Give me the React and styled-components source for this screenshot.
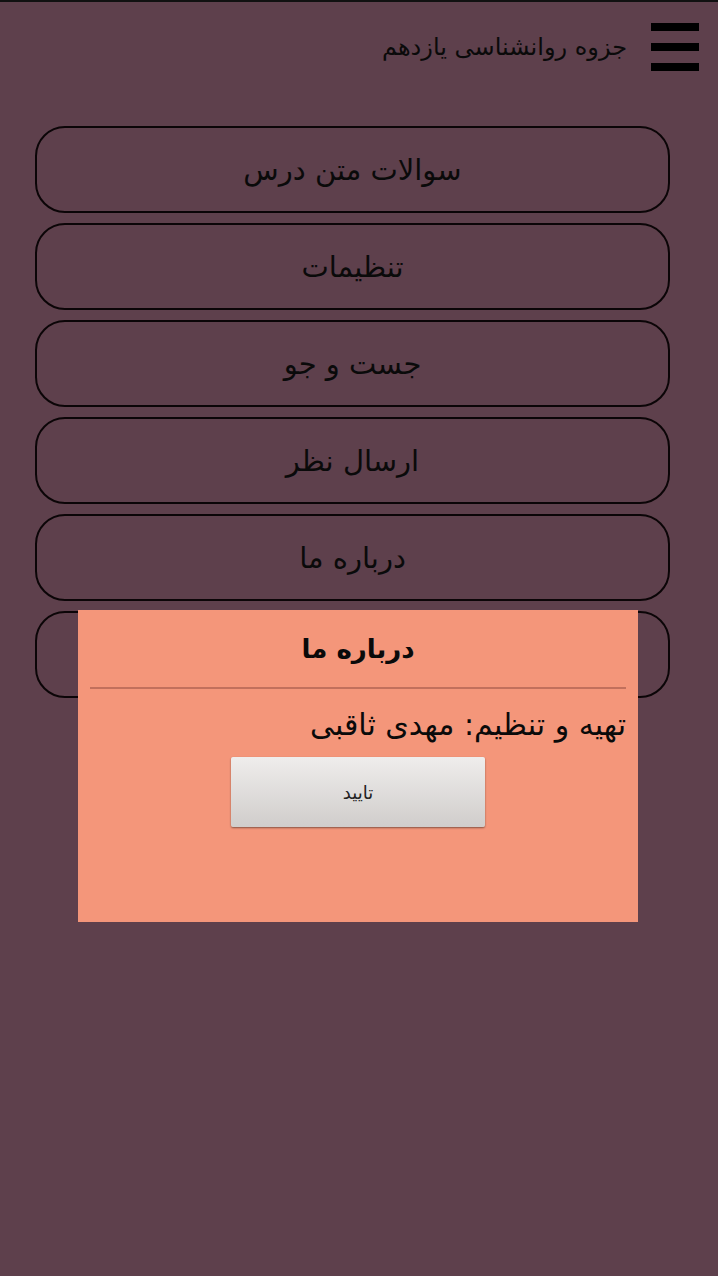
import React from "react";
import styled, { createGlobalStyle } from "styled-components";

const GlobalStyle = createGlobalStyle`
  html, body {
    margin: 0;
    padding: 0;
    background: #5e404c;
  }
  body {
    font-family: "DejaVu Sans", "Noto Sans", sans-serif;
  }
`;

// the sixth entry sits behind the dialog, its label can't be seen
const menuItems = [
  "سوالات متن درس",
  "تنظیمات",
  "جست و جو",
  "ارسال نظر",
  "درباره ما",
  "",
];

const App = () => {
  return (
    <React.Fragment>
      <GlobalStyle />
      <Screen dir="rtl">
        <TopBar>
          <MenuIcon aria-label="menu">
            <Bar />
            <Bar />
            <Bar />
          </MenuIcon>
          <Title>جزوه روانشناسی یازدهم</Title>
        </TopBar>
        <Menu>
          {menuItems.map((item, i) => (
            <MenuButton key={i}>{item}</MenuButton>
          ))}
        </Menu>
        <Dialog>
          <DialogTitle>درباره ما</DialogTitle>
          <Divider />
          <DialogText>تهیه و تنظیم: مهدی ثاقبی</DialogText>
          <OkButton>تایید</OkButton>
        </Dialog>
      </Screen>
    </React.Fragment>
  );
};

const Screen = styled.div`
  position: relative;
  width: 718px;
  height: 1276px;
  background: #5e404c;
  border-top: 2px solid #111;
  box-sizing: border-box;
  overflow: hidden;
`;

const TopBar = styled.div`
  display: flex;
  align-items: center;
  height: 90px;
  padding: 0 19px 0 0;
  gap: 24px;
`;

const MenuIcon = styled.div`
  display: flex;
  flex-direction: column;
  justify-content: space-between;
  width: 48px;
  height: 48px;
`;

const Bar = styled.span`
  display: block;
  height: 8px;
  background: #000;
`;

const Title = styled.div`
  font-size: 24px;
  color: #0a0a0a;
`;

const Menu = styled.div`
  display: flex;
  flex-direction: column;
  gap: 10px;
  padding: 34px 48px 0 35px;
`;

const MenuButton = styled.div`
  height: 83px;
  display: flex;
  align-items: center;
  justify-content: center;
  border: 2px solid #0b0507;
  border-radius: 30px;
  font-size: 29px;
  color: #0a0a0a;
`;

const Dialog = styled.div`
  position: absolute;
  left: 78px;
  top: 608px;
  width: 560px;
  height: 312px;
  background: #f4967a;
  display: flex;
  flex-direction: column;
  align-items: center;
  padding: 0 12px;
  box-sizing: border-box;
`;

const DialogTitle = styled.div`
  height: 77px;
  display: flex;
  align-items: center;
  font-size: 26px;
  font-weight: bold;
  color: #0a0a0a;
`;

const Divider = styled.div`
  align-self: stretch;
  height: 2px;
  background: #c2705c;
`;

const DialogText = styled.div`
  align-self: stretch;
  text-align: right;
  font-size: 30px;
  color: #0a0a0a;
  padding-top: 16px;
  line-height: 40px;
`;

const OkButton = styled.div`
  margin-top: 12px;
  width: 254px;
  height: 70px;
  display: flex;
  align-items: center;
  justify-content: center;
  font-size: 18px;
  color: #222;
  background: linear-gradient(#efedec, #d0cdcb);
  box-shadow: 0 1px 2px rgba(0, 0, 0, 0.45);
  border-radius: 2px;
`;

export default App;
